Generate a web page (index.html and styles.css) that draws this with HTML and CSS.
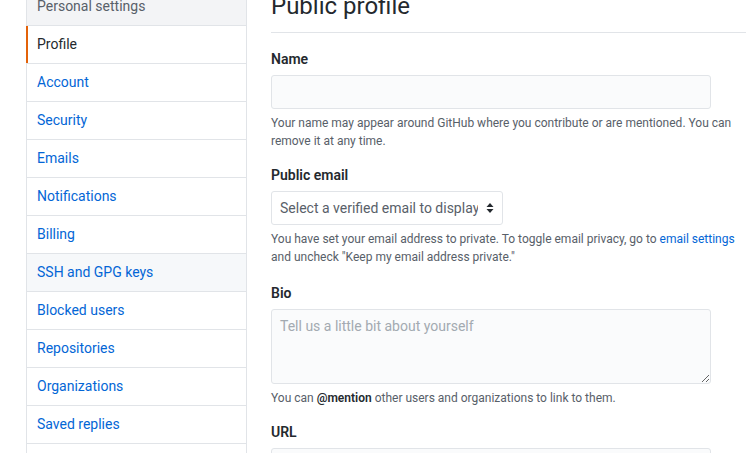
FILE: index.html
```html
<!DOCTYPE html>
<html lang="en">
<head>
<meta charset="utf-8">
<title>Public profile</title>
<link rel="stylesheet" href="styles.css">
</head>
<body>
<div class="page">
  <nav class="menu">
    <div class="menu-heading">Personal settings</div>
    <a class="menu-item selected" href="#">Profile</a>
    <a class="menu-item" href="#">Account</a>
    <a class="menu-item" href="#">Security</a>
    <a class="menu-item" href="#">Emails</a>
    <a class="menu-item" href="#">Notifications</a>
    <a class="menu-item" href="#">Billing</a>
    <a class="menu-item hover" href="#">SSH and GPG keys</a>
    <a class="menu-item" href="#">Blocked users</a>
    <a class="menu-item" href="#">Repositories</a>
    <a class="menu-item" href="#">Organizations</a>
    <a class="menu-item" href="#">Saved replies</a>
    <a class="menu-item" href="#">Applications</a>
  </nav>
  <main class="main">
    <div class="subhead"><h2 class="subhead-heading">Public profile</h2></div>
    <div class="form-group">
      <label class="label" for="name">Name</label>
      <input class="form-control wide" id="name" type="text">
      <p class="note">Your name may appear around GitHub where you contribute or are mentioned. You can remove it at any time.</p>
    </div>
    <div class="form-group form-group-email">
      <label class="label" for="email">Public email</label>
      <div class="select-wrap">
        <select class="form-select" id="email"><option>Select a verified email to display</option></select>
        <svg class="select-arrow" width="8" height="12" viewBox="0 0 8 12"><path d="M4 1 L7.5 5 H0.5 Z M4 11 L0.5 7 H7.5 Z" fill="#24292e"/></svg>
      </div>
      <p class="note">You have set your email address to private. To toggle email privacy, go to <a href="#">email settings</a> and uncheck "Keep my email address private."</p>
    </div>
    <div class="form-group">
      <label class="label" for="bio">Bio</label>
      <textarea class="form-control wide bio" id="bio" placeholder="Tell us a little bit about yourself"></textarea>
      <p class="note">You can <strong>@mention</strong> other users and organizations to link to them.</p>
    </div>
    <div class="form-group">
      <label class="label" for="url">URL</label>
      <input class="form-control wide" id="url" type="url">
    </div>
  </main>
</div>
</body>
</html>
```
FILE: styles.css
```css
* { box-sizing: border-box; }
html, body { margin: 0; overflow: hidden; }
body {
  font-family: Roboto, "Liberation Sans", sans-serif;
  font-size: 14px;
  line-height: 1.5;
  color: #24292e;
  background: #fff;
}
a { color: #0366d6; text-decoration: none; }
.page {
  display: flex;
  gap: 24px;
  margin-top: -12px;
  padding-left: 26px;
  width: 746px;
}
.menu {
  width: 221px;
  flex: none;
  border: 1px solid #e1e4e8;
  border-top: none;
  display: flex;
  flex-direction: column;
}
.menu-heading {
  padding: 8px 10px;
  background: #f3f4f6;
  color: #586069;
  border-bottom: 1px solid #e1e4e8;
  line-height: 21px;
}
.menu-item {
  position: relative;
  display: block;
  padding: 8px 10px;
  line-height: 21px;
  border-bottom: 1px solid #e1e4e8;
}
.menu-item.selected { color: #24292e; }
.menu-item.selected::before {
  content: "";
  position: absolute;
  left: -1px;
  top: 0;
  bottom: 0;
  width: 2px;
  background: #e36209;
}
.menu-item.hover { background: #f6f8fa; }
.main {
  flex: 1;
  min-width: 0;
}
.subhead {
  border-bottom: 1px solid #e1e4e8;
  padding-bottom: 8px;
  margin-bottom: 16px;
}
.subhead-heading {
  margin: 0;
  font-size: 24px;
  font-weight: 400;
  line-height: 36px;
}
.form-group { margin-bottom: 15px; }
.form-group-email { margin-bottom: 17px; }
.label {
  display: block;
  font-weight: 600;
  line-height: 21px;
  margin-bottom: 5px;
}
.form-control {
  display: block;
  font: inherit;
  color: #24292e;
  background: #fafbfc;
  border: 1px solid #e1e4e8;
  border-radius: 3px;
  padding: 6px 8px;
  line-height: 20px;
  height: 34px;
  outline: none;
}
.wide { width: 440px; }
.bio {
  height: 75px;
  resize: vertical;
}
.bio::placeholder { color: #a3aab1; }
.note {
  margin: 5px 0 0;
  font-size: 12px;
  line-height: 18px;
  color: #586069;
}
.note strong { color: #24292e; font-weight: 600; }
.select-wrap {
  position: relative;
  width: 232px;
}
.form-select {
  display: block;
  width: 232px;
  height: 34px;
  font: inherit;
  color: #586069;
  background: #fff;
  border: 1px solid #e1e4e8;
  border-radius: 3px;
  padding: 6px 24px 6px 8px;
  appearance: none;
  -webkit-appearance: none;
  outline: none;
}
.select-arrow {
  position: absolute;
  right: 9px;
  top: 11px;
  pointer-events: none;
}
```
